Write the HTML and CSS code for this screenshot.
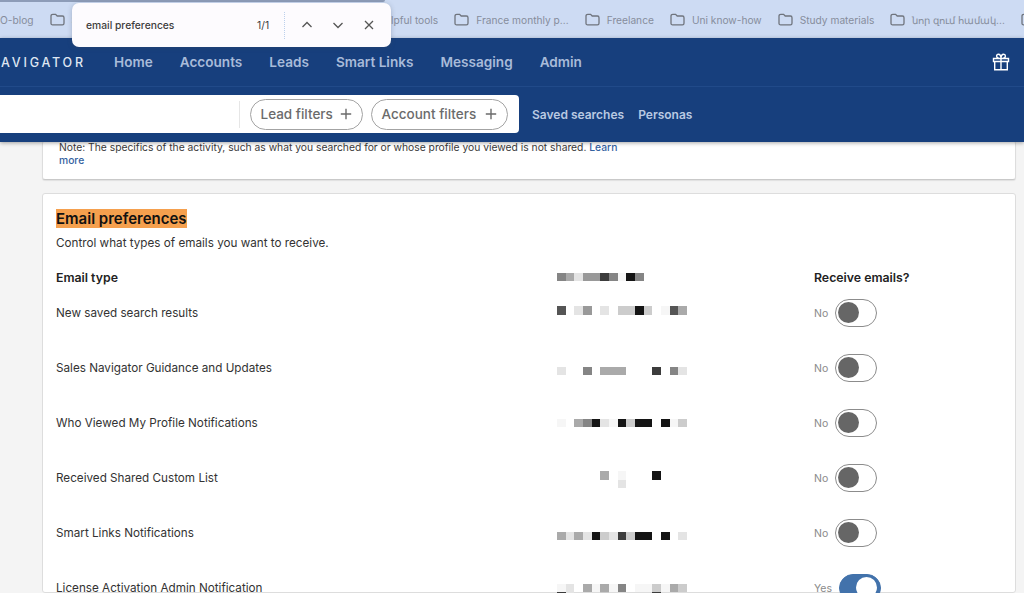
FILE: index.html
```html
<!DOCTYPE html>
<html lang="en">
<head>
    <meta charset="UTF-8">
    <title>Settings</title>
    <link rel="stylesheet" href="styles.css">
</head>
<body>
    <svg class="icon-defs" width="0" height="0">
        <symbol id="folder" viewBox="0 0 15 13">
            <path d="M1 3.2C1 2 1.7 1.3 2.8 1.3H5.6L7.2 3H12.4C13.4 3 14 3.7 14 4.7V10.2C14 11.2 13.4 11.8 12.4 11.8H2.6C1.6 11.8 1 11.2 1 10.2Z" fill="none" stroke="#6f747d" stroke-width="1.3"/>
        </symbol>
        <symbol id="plus" viewBox="0 0 12 12">
            <path d="M6 .8V11.2M.8 6H11.2" fill="none" stroke="#6b6b6b" stroke-width="1.4"/>
        </symbol>
    </svg>

    <div class="url-edge"></div>

    <div class="bookmarks">
        <span class="bookmark">O-blog</span>
        <span class="bookmark bookmark-wide"><svg class="folder"><use href="#folder"/></svg>Sales</span>
        <span class="bookmark"><svg class="folder"><use href="#folder"/></svg>Helpful tools</span>
        <span class="bookmark"><svg class="folder"><use href="#folder"/></svg>France monthly p...</span>
        <span class="bookmark"><svg class="folder"><use href="#folder"/></svg>Freelance</span>
        <span class="bookmark"><svg class="folder"><use href="#folder"/></svg>Uni know-how</span>
        <span class="bookmark"><svg class="folder"><use href="#folder"/></svg>Study materials</span>
        <span class="bookmark"><svg class="folder"><use href="#folder"/></svg>նոր զում համակ...</span>
        <span class="bookmark"><svg class="folder"><use href="#folder"/></svg></span>
    </div>

    <div class="find-bar">
        <span class="find-text">email preferences</span>
        <span class="find-count">1/1</span>
        <span class="find-divider"></span>
        <svg class="find-icon" viewBox="0 0 12 12"><path d="M1.5 8L6 3.5L10.5 8"/></svg>
        <svg class="find-icon" viewBox="0 0 12 12"><path d="M1.5 4L6 8.5L10.5 4"/></svg>
        <svg class="find-icon" viewBox="0 0 12 12"><path d="M2 2L10 10M10 2L2 10"/></svg>
    </div>

    <header class="header">
        <nav class="main-nav">
            <span class="brand">AVIGATOR</span>
            <a class="nav-link">Home</a>
            <a class="nav-link">Accounts</a>
            <a class="nav-link">Leads</a>
            <a class="nav-link">Smart Links</a>
            <a class="nav-link">Messaging</a>
            <a class="nav-link">Admin</a>
            <svg class="gift" viewBox="0 0 18 18">
                <path d="M1.5 5.5H16.5V8.5H1.5ZM2.7 8.5V16.7H15.3V8.5M9 5.5V16.7M9 5.5C6.5 5.5 4.6 4.7 4.6 3C4.6 1.9 5.4 1.2 6.3 1.2C8 1.2 9 3.4 9 5.5C9 3.4 10 1.2 11.7 1.2C12.6 1.2 13.4 1.9 13.4 3C13.4 4.7 11.5 5.5 9 5.5Z"/>
            </svg>
        </nav>
        <div class="sub-nav">
            <div class="search-box">
                <span class="search-divider"></span>
                <button class="pill pill-lead">Lead filters <svg class="plus"><use href="#plus"/></svg></button>
                <button class="pill pill-account">Account filters <svg class="plus"><use href="#plus"/></svg></button>
            </div>
            <a class="sub-link">Saved searches</a>
            <a class="sub-link">Personas</a>
        </div>
    </header>

    <main class="content">
        <section class="card card-note">
            <p class="note">Note: The specifics of the activity, such as what you searched for or whose profile you viewed is not shared. <a class="learn">Learn more</a></p>
        </section>

        <section class="card card-email">
            <h2 class="card-title"><mark class="hit">Email preferences</mark></h2>
            <p class="card-sub">Control what types of emails you want to receive.</p>

            <div class="table">
                <div class="row row-head">
                    <span class="col-name">Email type</span>
                    <div class="mosaic mosaic-head"><i class="g5"></i><i class="g3"></i><i class="g1"></i><i class="g4"></i><i class="g4"></i><i class="g7"></i><i class="g5"></i><i class="g0"></i><i class="g8"></i><i class="g5"></i></div>
                    <span class="col-name">Receive emails?</span>
                </div>

                <div class="row">
                    <span class="row-name">New saved search results</span>
                    <div class="mosaic mosaic-high"><i class="g6"></i><i></i><i class="g1"></i><i class="g4"></i><i></i><i class="g1"></i><i></i><i class="g2"></i><i class="g2"></i><i class="g8"></i><i class="g2"></i><i></i><i class="g0"></i><i class="g6"></i><i class="g3"></i></div>
                    <div class="switch-cell"><span class="state">No</span><span class="switch"></span></div>
                </div>

                <div class="row">
                    <span class="row-name">Sales Navigator Guidance and Updates</span>
                    <div class="mosaic mosaic-low"><i class="g1"></i><i></i><i></i><i class="g5"></i><i></i><i class="g3"></i><i class="g3"></i><i class="g3"></i><i></i><i></i><i></i><i class="g7"></i><i></i><i class="g5"></i><i class="g1"></i></div>
                    <div class="switch-cell"><span class="state">No</span><span class="switch"></span></div>
                </div>

                <div class="row">
                    <span class="row-name">Who Viewed My Profile Notifications</span>
                    <div class="mosaic mosaic-mid"><i class="g0"></i><i></i><i class="g3"></i><i class="g5"></i><i class="g8"></i><i class="g1"></i><i class="g0"></i><i class="g8"></i><i class="g2"></i><i class="g8"></i><i class="g8"></i><i></i><i class="g8"></i><i class="g0"></i><i class="g2"></i></div>
                    <div class="switch-cell"><span class="state">No</span><span class="switch"></span></div>
                </div>

                <div class="row">
                    <span class="row-name">Received Shared Custom List</span>
                    <div class="mosaic mosaic-high"><i></i><i></i><i></i><i></i><i></i><i class="g3"></i><i></i><i class="g0"></i><i></i><i></i><i></i><i class="g8"></i><i></i><i></i><i></i><i></i><i></i><i></i><i></i><i></i><i></i><i></i><i class="g1"></i></div>
                    <div class="switch-cell"><span class="state">No</span><span class="switch"></span></div>
                </div>

                <div class="row">
                    <span class="row-name">Smart Links Notifications</span>
                    <div class="mosaic mosaic-low"><i class="g3"></i><i class="g1"></i><i class="g3"></i><i class="g1"></i><i class="g8"></i><i class="g2"></i><i class="g1"></i><i class="g7"></i><i class="g2"></i><i class="g8"></i><i class="g8"></i><i></i><i class="g8"></i><i></i><i class="g1"></i></div>
                    <div class="switch-cell"><span class="state">No</span><span class="switch"></span></div>
                </div>

                <div class="row">
                    <span class="row-name">License Activation Admin Notification</span>
                    <div class="mosaic mosaic-mid"><i class="g0"></i><i class="g1"></i><i></i><i class="g3"></i><i class="g0"></i><i class="g3"></i><i class="g0"></i><i class="g5"></i><i></i><i class="g0"></i><i class="g0"></i><i class="g2"></i><i class="g0"></i><i class="g3"></i><i class="g2"></i><i class="g7"></i><i class="g1"></i><i></i><i></i><i></i><i class="g2"></i><i></i><i></i><i></i><i></i><i></i><i class="g7"></i></div>
                    <div class="switch-cell"><span class="state state-on">Yes</span><span class="switch switch-on"></span></div>
                </div>
            </div>
        </section>
    </main>
</body>
</html>
```

FILE: styles.css
```css
html, body {
    margin: 0;
    padding: 0;
    height: 593px;
    overflow: hidden;
}
body {
    position: relative;
    background-color: #f4f4f4;
    font-family: Inter, "Noto Sans", sans-serif;
    color: #333333;
}
.icon-defs {
    position: absolute;
}

/* browser chrome */
.url-edge {
    position: absolute;
    top: 0;
    left: 0;
    width: 385px;
    height: 2px;
    background-color: #8d9cb8;
    border-radius: 0 0 4px 0;
}
.bookmarks {
    display: flex;
    align-items: center;
    gap: 16px;
    height: 38px;
    padding-top: 1px;
    box-sizing: border-box;
    background-color: #cddbf3;
    font-size: 10.2px;
    color: #868d9c;
    white-space: nowrap;
    overflow: hidden;
}
.bookmark {
    display: flex;
    flex-shrink: 0;
    align-items: center;
    gap: 7px;
}
.bookmark-wide {
    width: 290px;
}
.folder {
    width: 15px;
    height: 13px;
}
.find-bar {
    position: absolute;
    z-index: 5;
    top: 3px;
    left: 72px;
    width: 319px;
    height: 44px;
    display: flex;
    align-items: center;
    box-sizing: border-box;
    padding-left: 14px;
    background-color: #fdfbfe;
    border-radius: 7px;
    box-shadow: 0 1px 5px rgba(60, 70, 90, .3);
    font-size: 10.3px;
    color: #3d3d3d;
}
.find-text {
    width: 171px;
    font-weight: 500;
}
.find-count {
    width: 27px;
}
.find-divider {
    height: 27px;
    border-left: 1px dotted #bcd0ec;
    margin-right: 16px;
}
.find-icon {
    width: 12px;
    height: 12px;
    margin-right: 19px;
    fill: none;
    stroke: #555555;
    stroke-width: 1.3;
}
.find-icon:last-child {
    margin-right: 0;
}

/* dark header */
.header {
    position: relative;
    z-index: 3;
    background-color: #173f7d;
    box-shadow: 0 1px 4px rgba(0, 0, 0, .35);
}
.main-nav {
    display: flex;
    align-items: center;
    height: 49px;
    border-bottom: 1px solid #214a89;
    box-sizing: border-box;
    font-size: 13.6px;
    font-weight: 600;
}
.brand {
    margin-left: 1px;
    margin-right: 29px;
    width: 84px;
    color: #dfe6f2;
    font-size: 12.5px;
    font-weight: 500;
    letter-spacing: 2.8px;
    white-space: nowrap;
}
.nav-link {
    margin-right: 27px;
    color: #a8bbd9;
}
.gift {
    margin-left: auto;
    margin-right: 14px;
    width: 18px;
    height: 18px;
    fill: none;
    stroke: #ffffff;
    stroke-width: 1.4;
}
.sub-nav {
    display: flex;
    align-items: center;
    height: 55px;
    padding-bottom: 1px;
    box-sizing: border-box;
}
.search-box {
    display: flex;
    align-items: center;
    width: 519px;
    height: 38px;
    padding-left: 239px;
    padding-right: 11px;
    box-sizing: border-box;
    background-color: #ffffff;
    border-radius: 0 4px 4px 0;
    margin-right: 13px;
}
.search-divider {
    height: 27px;
    border-left: 1px solid #e6e6e6;
    margin-right: 10px;
}
.pill {
    display: flex;
    align-items: center;
    justify-content: space-between;
    height: 31px;
    padding: 0 10px 0 9.5px;
    box-sizing: border-box;
    border: 1px solid #a3a3a3;
    border-radius: 16px;
    background-color: #ffffff;
    font-family: inherit;
    font-size: 13.5px;
    font-weight: 500;
    color: #6b6b6b;
}
.pill-lead {
    width: 113px;
    margin-right: 8px;
}
.pill-account {
    width: 137px;
}
.plus {
    width: 12px;
    height: 12px;
}
.sub-link {
    margin-right: 14px;
    font-size: 12px;
    font-weight: 600;
    color: #b9c9e2;
}

/* settings cards */
.content {
    padding-left: 42px;
    padding-right: 8px;
}
.card {
    background-color: #ffffff;
    border: 1px solid #dddddd;
    border-radius: 3px;
    box-sizing: border-box;
}
.card-note {
    height: 39px;
    border-top: none;
    border-bottom-color: #c9c9c9;
    box-shadow: 0 1px 1px rgba(0, 0, 0, .08);
    padding: 0 16px;
    margin-bottom: 13px;
}
.note {
    margin: -1px 0 0;
    width: 570px;
    font-size: 10.3px;
    line-height: 13px;
    color: #3a3a3a;
}
.learn {
    color: #34629f;
    font-weight: 500;
}
.card-email {
    height: 400px;
    padding: 15px 13px 0;
}
.card-title {
    margin: 0;
    font-size: 15px;
    font-weight: 600;
    line-height: 19px;
    color: #111111;
}
.hit {
    background-color: #f5a04e;
    color: inherit;
}
.card-sub {
    margin: 7px 0 0;
    font-size: 11.7px;
    line-height: 16px;
}

/* table of email types, mosaics stand in for the blurred column */
.table {
    margin-top: 19px;
}
.row {
    display: grid;
    grid-template-columns: 501px 257px 1fr;
    align-items: center;
    height: 55px;
}
.row-head {
    height: 15px;
}
.col-name {
    font-size: 12.3px;
    font-weight: 600;
    color: #222222;
}
.row-name {
    font-size: 11.7px;
}
.mosaic {
    display: grid;
    grid-template-columns: repeat(15, 8.67px);
    grid-auto-rows: 8.67px;
    align-self: start;
}
.mosaic-head {
    margin-top: 2.5px;
}
.mosaic-high {
    margin-top: 21px;
}
.mosaic-mid {
    margin-top: 23.6px;
}
.mosaic-low {
    margin-top: 26.6px;
}
.mosaic i {
    display: block;
}
.g0 { background-color: #f6f6f6; }
.g1 { background-color: #e4e4e4; }
.g2 { background-color: #cccccc; }
.g3 { background-color: #aaaaaa; }
.g4 { background-color: #999999; }
.g5 { background-color: #858585; }
.g6 { background-color: #555555; }
.g7 { background-color: #3c3c3c; }
.g8 { background-color: #141414; }
.switch-cell {
    display: flex;
    align-items: center;
    gap: 7px;
    font-size: 10.5px;
    color: #8a8a8a;
}
.state {
    min-width: 14px;
    padding-top: 2px;
}
.state-on {
    min-width: 17px;
}
.switch {
    position: relative;
    display: block;
    width: 42px;
    height: 28px;
    box-sizing: border-box;
    border: 1.5px solid #8c8c8c;
    border-radius: 14px;
    background-color: #ffffff;
}
.switch::after {
    content: "";
    position: absolute;
    top: 2px;
    left: 2px;
    width: 21px;
    height: 21px;
    border-radius: 50%;
    background-color: #666666;
}
.switch-on {
    border-color: #4272ab;
    background-color: #4272ab;
}
.switch-on::after {
    left: 16px;
    background-color: #ffffff;
}
```
